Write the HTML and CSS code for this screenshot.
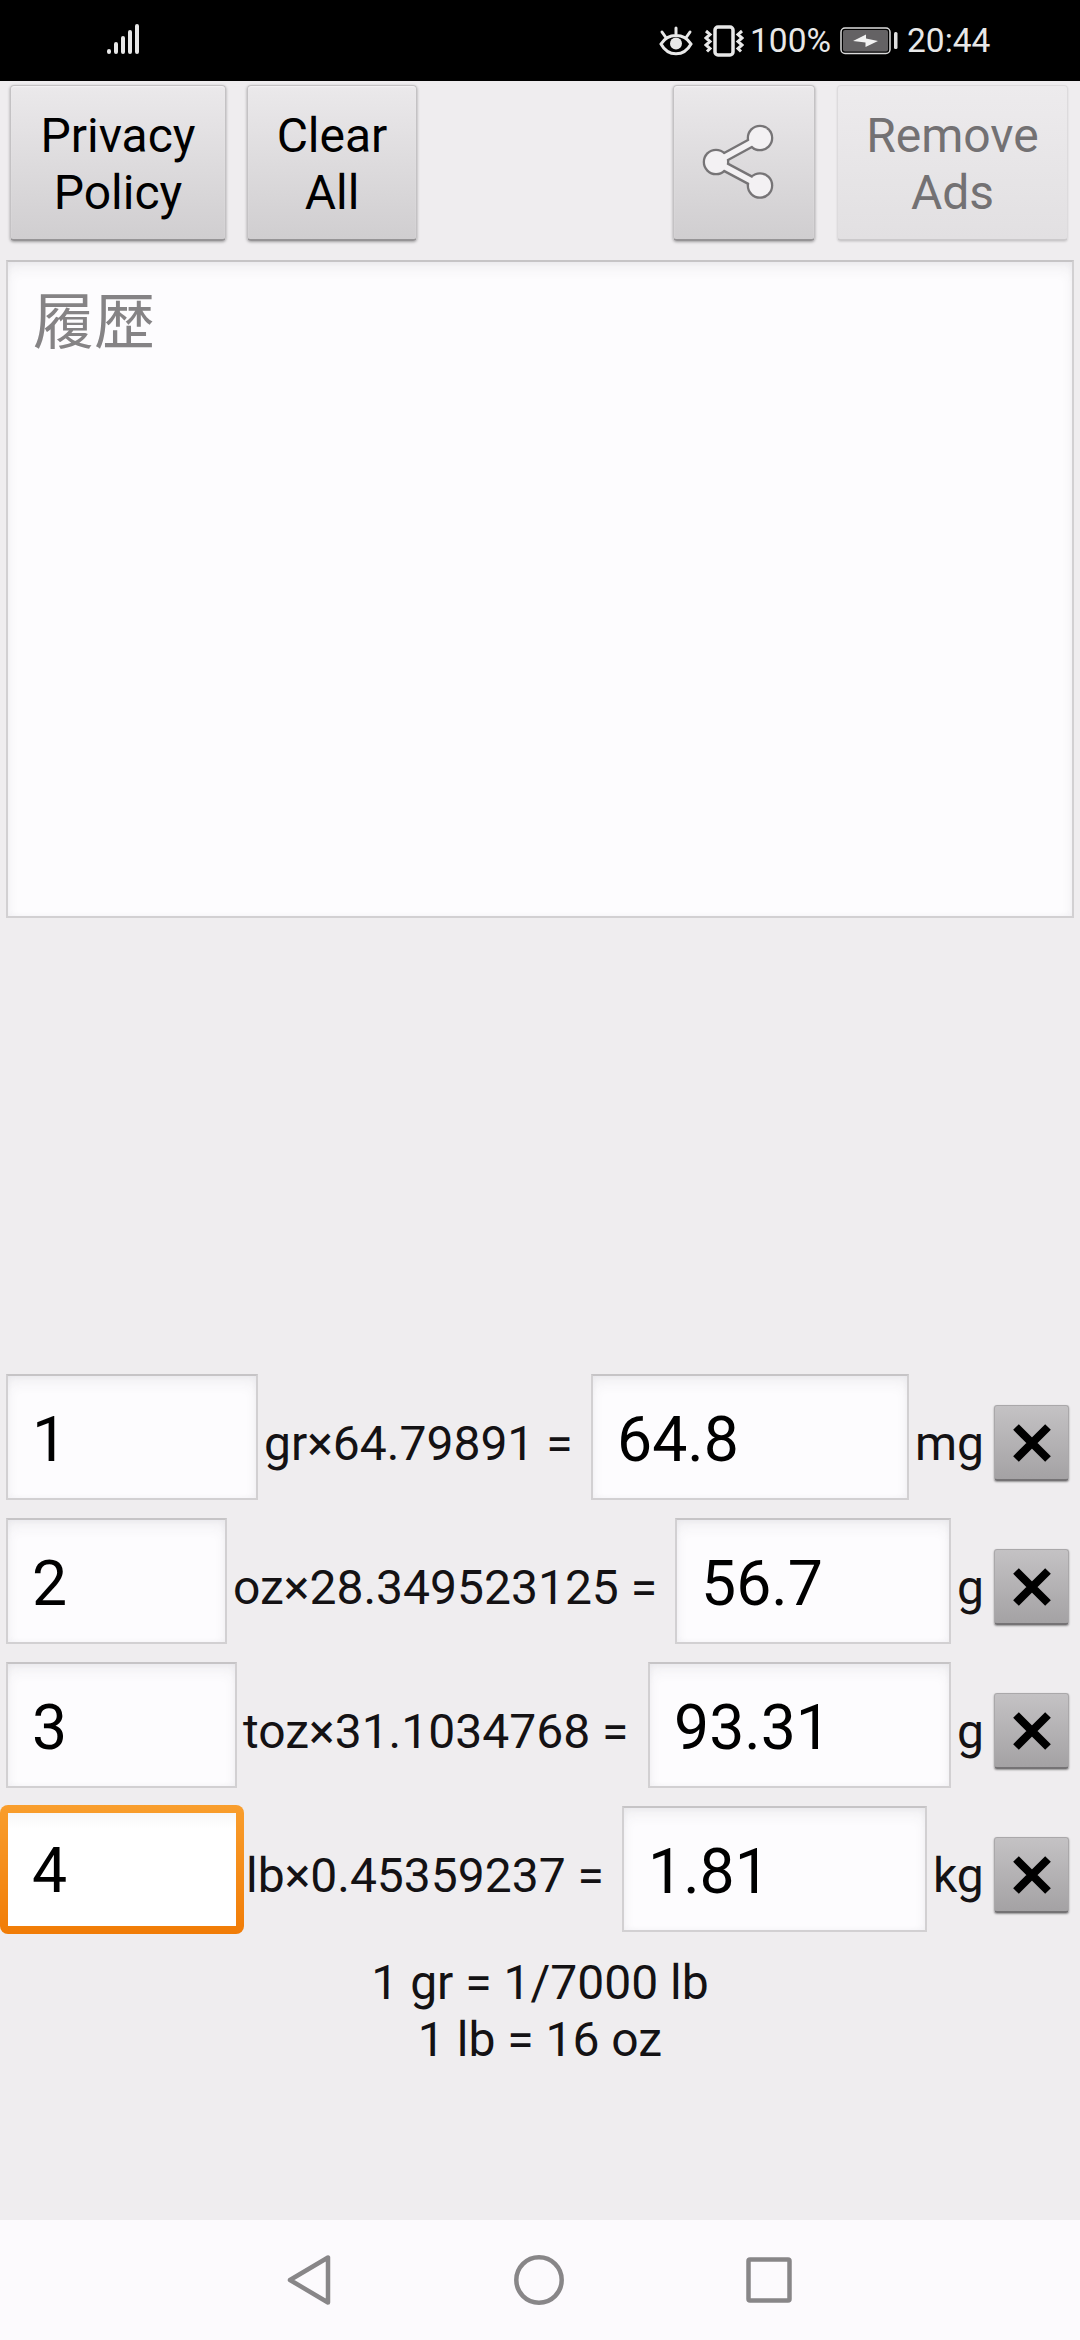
FILE: index.html
```
<!DOCTYPE html>
<html lang="ja">
<head>
    <meta charset="UTF-8">
    <meta name="viewport" content="width=device-width, initial-scale=1.0">
    <title>Weight Converter</title>
    <link rel="stylesheet" href="styles.css">
</head>
<body>
    <div class="status-bar">
        <svg class="signal" width="34" height="34" viewBox="0 0 34 34" stroke="#e8e8e8" stroke-width="4" stroke-linecap="round">
            <path d="M3 29v-1M10 29v-8M17 29v-14M24 29v-20M31 29v-26"/>
        </svg>
        <div class="status-right">
            <svg class="eye" width="34" height="32" viewBox="0 0 34 32" fill="none" stroke="#e8e8e8" stroke-width="3" stroke-linecap="round">
                <path d="M2 19C9 7.500 25 7.500 32 19C25 32 9 32 2 19zM17 9V3M6.500 12L3 7M27.500 12L31 7"/>
                <circle cx="17" cy="18.500" r="6" fill="#e8e8e8" stroke="none"/>
            </svg>
            <svg class="vibrate" width="40" height="32" viewBox="0 0 40 32" fill="none" stroke="#e8e8e8">
                <rect x="11" y="2" width="18" height="28" rx="3" stroke-width="3.500"/>
                <path d="M2 6l4 3.500-4 3.500 4 3.500-4 3.500 4 3.500-3 3M38 6l-4 3.500 4 3.500-4 3.500 4 3.500-4 3.500 3 3" stroke-width="3"/>
            </svg>
            <span class="battery-text">100%</span>
            <svg class="battery" width="60" height="28" viewBox="0 0 60 28">
                <rect x="1" y="1" width="49" height="25.500" rx="4" fill="#000" stroke="#dcdcdc" stroke-width="1.500"/>
                <rect x="3" y="3" width="45" height="21.500" rx="2" fill="#646264"/>
                <path d="M13 14L26 7.500V11.500L38 14L25.500 20V15.500z" fill="#f2f2f2"/>
                <rect x="54" y="5" width="3.500" height="17" rx="1.500" fill="#e0e0e0"/>
            </svg>
            <span class="clock">20:44</span>
        </div>
    </div>

    <div class="app">
        <div class="toolbar">
            <button class="btn btn-privacy">Privacy<br>Policy</button>
            <button class="btn btn-clear">Clear<br>All</button>
            <button class="btn btn-share" aria-label="Share">
                <svg width="74" height="76" viewBox="0 0 74 76">
                    <g stroke="#767476" fill="#767476">
                        <path d="M15 38L59 14M15 38L59 61.500" stroke-width="10.500"/>
                        <circle cx="15" cy="38" r="13.300" stroke="none"/>
                        <circle cx="59" cy="14" r="13.300" stroke="none"/>
                        <circle cx="59" cy="61.500" r="13.300" stroke="none"/>
                    </g>
                    <g stroke="#f3f1f3" fill="#f3f1f3">
                        <path d="M15 38L59 14M15 38L59 61.500" stroke-width="5.800"/>
                        <circle cx="15" cy="38" r="11" stroke="none"/>
                        <circle cx="59" cy="14" r="11" stroke="none"/>
                        <circle cx="59" cy="61.500" r="11" stroke="none"/>
                    </g>
                </svg>
            </button>
            <button class="btn btn-ads" disabled>Remove<br>Ads</button>
        </div>

        <textarea class="history" placeholder="履歴"></textarea>

        <div class="rows">
            <div class="row row-gr">
                <input class="field from" value="1">
                <span class="label">gr×64.79891 =</span>
                <input class="field to" value="64.8">
                <span class="unit">mg</span>
                <button class="btn-x" aria-label="Clear"><svg width="40" height="40" viewBox="0 0 40 40"><path d="M4 4L36 36M36 4L4 36"/></svg></button>
            </div>
            <div class="row row-oz">
                <input class="field from" value="2">
                <span class="label">oz×28.349523125 =</span>
                <input class="field to" value="56.7">
                <span class="unit">g</span>
                <button class="btn-x" aria-label="Clear"><svg width="40" height="40" viewBox="0 0 40 40"><path d="M4 4L36 36M36 4L4 36"/></svg></button>
            </div>
            <div class="row row-toz">
                <input class="field from" value="3">
                <span class="label">toz×31.1034768 =</span>
                <input class="field to" value="93.31">
                <span class="unit">g</span>
                <button class="btn-x" aria-label="Clear"><svg width="40" height="40" viewBox="0 0 40 40"><path d="M4 4L36 36M36 4L4 36"/></svg></button>
            </div>
            <div class="row row-lb">
                <input class="field from active" value="4">
                <span class="label">lb×0.45359237 =</span>
                <input class="field to" value="1.81">
                <span class="unit">kg</span>
                <button class="btn-x" aria-label="Clear"><svg width="40" height="40" viewBox="0 0 40 40"><path d="M4 4L36 36M36 4L4 36"/></svg></button>
            </div>
        </div>

        <div class="notes">1 gr = 1/7000 lb<br>1 lb = 16 oz</div>
    </div>

    <div class="nav-bar">
        <svg width="50" height="54" viewBox="0 0 50 54"><path d="M44 4.500V49.500L6 27z"/></svg>
        <svg width="54" height="54" viewBox="0 0 54 54"><circle cx="27" cy="27" r="22.700"/></svg>
        <svg width="50" height="54" viewBox="0 0 50 54"><rect x="4.500" y="6.500" width="41" height="41" rx="1.500"/></svg>
    </div>
</body>
</html>
```

FILE: styles.css
```
* {
    box-sizing: border-box;
}
body {
    margin: 0;
    width: 1080px;
    height: 2340px;
    display: flex;
    flex-direction: column;
    font-family: Roboto, "Noto Sans CJK JP", sans-serif;
    font-size: 48px;
    line-height: 57px;
    color: #141214;
    background-color: #efedef;
    overflow: hidden;
}
button, input, textarea {
    font-family: inherit;
    margin: 0;
    border-radius: 0;
    outline: none;
}
svg {
    display: block;
}

/* status bar */
.status-bar {
    height: 81px;
    flex: none;
    display: flex;
    align-items: center;
    justify-content: space-between;
    padding: 0 88px 0 106px;
    background-color: #000;
    color: #e8e8e8;
    font-size: 33.500px;
}
.signal {
    margin-bottom: 1px;
}
.status-right {
    display: flex;
    align-items: center;
}
.vibrate {
    margin-left: 11px;
}
.battery-text {
    margin-left: 6px;
    width: 90px;
}
.clock {
    margin-left: 7px;
    width: 85px;
}

/* main screen */
.app {
    flex: 1;
    display: flex;
    flex-direction: column;
}
.toolbar {
    display: flex;
    padding: 4px 12px 0 10px;
}
.btn {
    height: 156px;
    padding: 3px 0 0;
    border: 1px solid #c4c2c4;
    border-bottom: 2px solid #969496;
    border-radius: 4px;
    background: linear-gradient(#ebe9eb, #d0ced0);
    box-shadow: 0 1px 3px rgba(0, 0, 0, 0.35), inset 0 1px 1px #f4f2f4;
    font-size: 48px;
    line-height: 57px;
    color: #000;
}
.btn-privacy {
    width: 216px;
}
.btn-clear {
    width: 170px;
    margin-left: 21px;
}
.btn-share {
    width: 142px;
    margin-left: auto;
    padding: 0 0 2px 27px;
}
.btn-ads {
    width: 231px;
    margin-left: 22px;
    border-color: #dddbdd;
    border-bottom-color: #cbc9cb;
    background: linear-gradient(#edebed, #e2e0e2);
    box-shadow: 0 1px 2px rgba(0, 0, 0, 0.12);
    color: #737173;
}
.history, .field {
    border: 2px solid #d2d0d2;
    border-top-color: #c6c4c6;
    background-color: #fdfcfe;
    box-shadow: inset 0 8px 16px -4px rgba(60, 50, 70, 0.09), inset 0 0 6px rgba(60, 50, 70, 0.04);
    font-size: 62.500px;
    color: #000;
}
.history {
    display: block;
    height: 658px;
    margin: 19px 6px 0;
    padding: 23px 25px;
    font-size: 61px;
    line-height: 76px;
    resize: none;
}
.history::placeholder {
    color: #858385;
}
.rows {
    display: flex;
    flex-direction: column;
    gap: 18px;
    margin-top: 456px;
}
.row {
    display: flex;
    align-items: center;
    height: 126px;
    padding: 0 11px 0 6px;
}
.field {
    flex: none;
    height: 126px;
    padding: 5px 24px 0;
}
.label {
    flex: 1;
    padding: 13px 0 0 6px;
    white-space: nowrap;
}
.unit {
    padding: 13px 6px 0;
    width: 85px;
}
.row-gr .from { width: 252px; }
.row-gr .to { width: 318px; }
.row-oz .from { width: 221px; }
.row-oz .to { width: 276px; }
.row-oz .unit, .row-toz .unit { width: 43px; }
.row-toz .from { width: 231px; }
.row-toz .to { width: 303px; }
.row-lb .to { width: 305px; }
.row-lb .unit { width: 67px; }

/* focus ring is wider than the normal border */
.field.active {
    width: 244px;
    height: 129px;
    margin: 0 -6px;
    padding: 3px 24px 0;
    border: 8px solid transparent;
    border-radius: 8px;
    background: linear-gradient(#f7f7f7, #fff 16px) padding-box, linear-gradient(#f99e2d, #f17c06) border-box;
    box-shadow: none;
}
.active + .label {
    padding-left: 8px;
}
.btn-x {
    flex: none;
    width: 75px;
    height: 76px;
    margin-top: 12px;
    padding: 0;
    display: flex;
    align-items: center;
    justify-content: center;
    border: 1px solid #aaa8aa;
    border-bottom: 2px solid #757375;
    border-radius: 3px;
    background: linear-gradient(#c4c2c4, #a4a2a4);
    box-shadow: 0 1px 2px rgba(0, 0, 0, 0.4);
}
.btn-x path {
    stroke: #000;
    stroke-width: 8;
}
.notes {
    margin-top: 22px;
    text-align: center;
}

/* system navigation */
.nav-bar {
    height: 120px;
    flex: none;
    display: flex;
    align-items: center;
    justify-content: space-between;
    padding: 0 286px 0 284px;
    background-color: #fcfafd;
}
.nav-bar svg {
    fill: none;
    stroke: #888688;
    stroke-width: 4.500;
    stroke-linejoin: round;
}
```
